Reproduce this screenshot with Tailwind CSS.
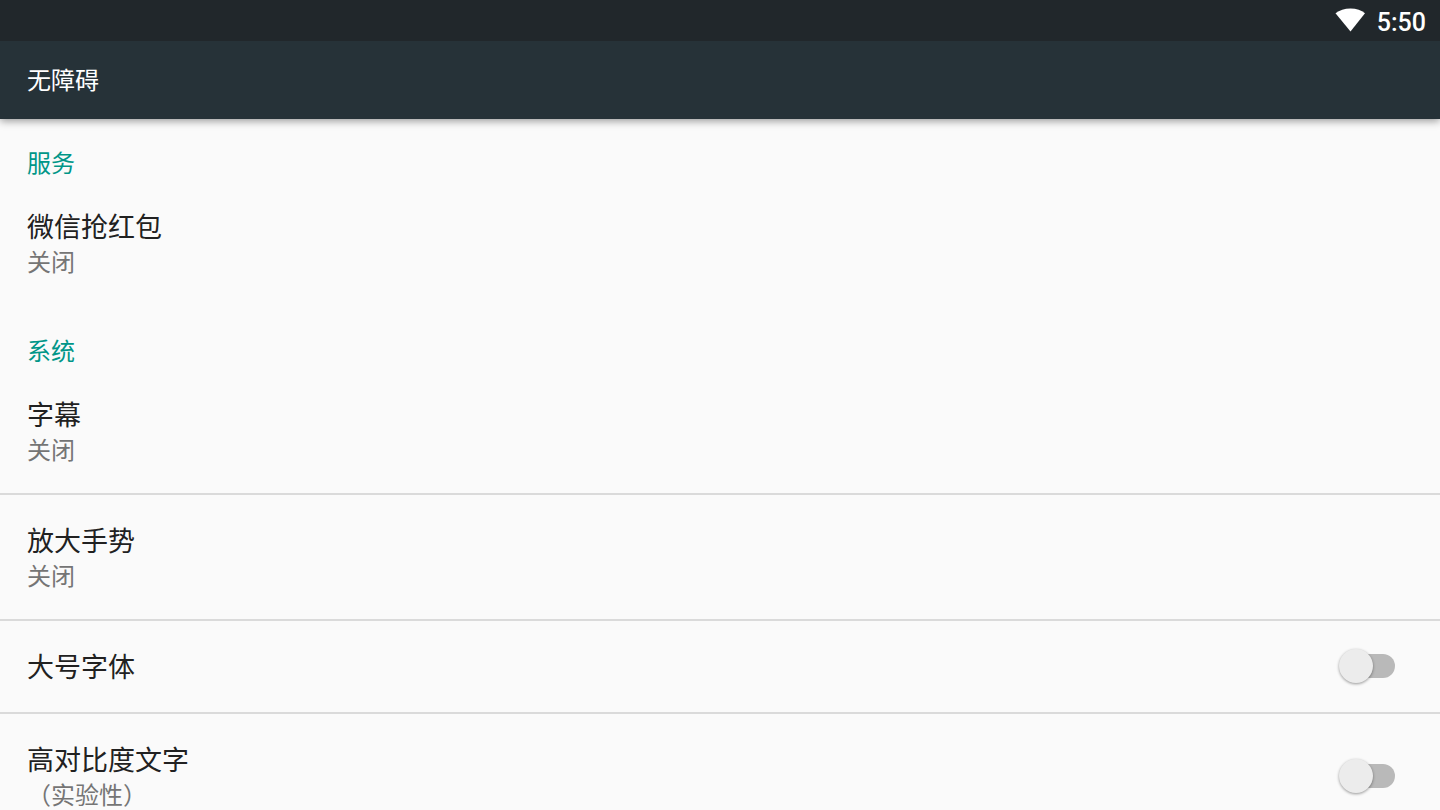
<!DOCTYPE html>
<html lang="zh-CN">
<head>
<meta charset="utf-8">
<meta name="viewport" content="width=device-width, initial-scale=1">
<title>无障碍</title>
<script src="https://cdn.jsdelivr.net/npm/@tailwindcss/browser@4"></script>
</head>
<body class="flex h-screen flex-col overflow-hidden bg-[#fafafa] font-['Noto_Sans_CJK_SC',sans-serif] text-[#212121]">
  <div class="relative z-10 flex h-[41px] shrink-0 items-start justify-end gap-3 bg-[#21272b] pt-2 pr-[14px] text-white">
    <svg class="h-6 w-[30px]" viewBox="0 0 30 24" fill="currentColor" role="img" aria-label="Wi-Fi"><path d="M15.5 23.6.5 5.2C4.5 2 9.5.4 15.500.4S26.500 2 30 5.200Z"/></svg>
    <time class="font-['Roboto',sans-serif] text-[25px] leading-[30px] font-medium">5:50</time>
  </div>
  <header class="relative flex h-[78px] shrink-0 items-center bg-[#263238] px-[27px] pb-[2px] shadow-[0_2px_8px_rgba(0,0,0,0.4)]">
    <h1 class="text-2xl text-white">无障碍</h1>
  </header>
  <main class="min-h-0 flex-1 overflow-hidden">
    <section>
      <h2 class="px-[27px] pt-[26px] pb-[2px] text-2xl leading-[34px] text-[#009688]">服务</h2>
      <a href="#wechat" class="block px-[27px] pt-[26px] pb-[28px]">
        <span class="block text-[27px] leading-[38px]">微信抢红包</span>
        <span class="block text-2xl leading-[32px] text-[#757575]">关闭</span>
      </a>
    </section>
    <section>
      <h2 class="px-[27px] pt-[28px] pb-[2px] text-2xl leading-[34px] text-[#009688]">系统</h2>
      <div class="divide-y-2 divide-[#dadada]">
        <a href="#captions" class="block px-[27px] pt-[26px] pb-[28px]">
          <span class="block text-[27px] leading-[38px]">字幕</span>
          <span class="block text-2xl leading-[32px] text-[#757575]">关闭</span>
        </a>
        <a href="#magnify" class="block px-[27px] pt-[26px] pb-[28px]">
          <span class="block text-[27px] leading-[38px]">放大手势</span>
          <span class="block text-2xl leading-[32px] text-[#757575]">关闭</span>
        </a>
        <label class="flex items-center justify-between pt-[26px] pr-[45px] pb-[27px] pl-[27px]">
          <span class="text-[27px] leading-[38px]">大号字体</span>
          <input type="checkbox" role="switch" class="relative h-[34px] w-14 appearance-none before:absolute before:top-[5px] before:right-0 before:h-6 before:w-12 before:rounded-full before:bg-[#b9b9b9] after:absolute after:top-0 after:left-0 after:size-[34px] after:rounded-full after:bg-[#ececec] after:shadow-[0_1px_3px_rgba(0,0,0,0.4)] checked:before:bg-[#80cbc4] checked:after:left-[22px] checked:after:bg-[#009688]">
        </label>
        <label class="flex items-center justify-between pr-[45px] pl-[27px]">
          <span class="pt-[26px] pb-[28px]">
            <span class="block text-[27px] leading-[38px]">高对比度文字</span>
            <span class="block text-2xl leading-[32px] text-[#757575]">（实验性）</span>
          </span>
          <input type="checkbox" role="switch" class="relative h-[34px] w-14 appearance-none before:absolute before:top-[5px] before:right-0 before:h-6 before:w-12 before:rounded-full before:bg-[#b9b9b9] after:absolute after:top-0 after:left-0 after:size-[34px] after:rounded-full after:bg-[#ececec] after:shadow-[0_1px_3px_rgba(0,0,0,0.4)] checked:before:bg-[#80cbc4] checked:after:left-[22px] checked:after:bg-[#009688]">
        </label>
      </div>
    </section>
  </main>
</body>
</html>
